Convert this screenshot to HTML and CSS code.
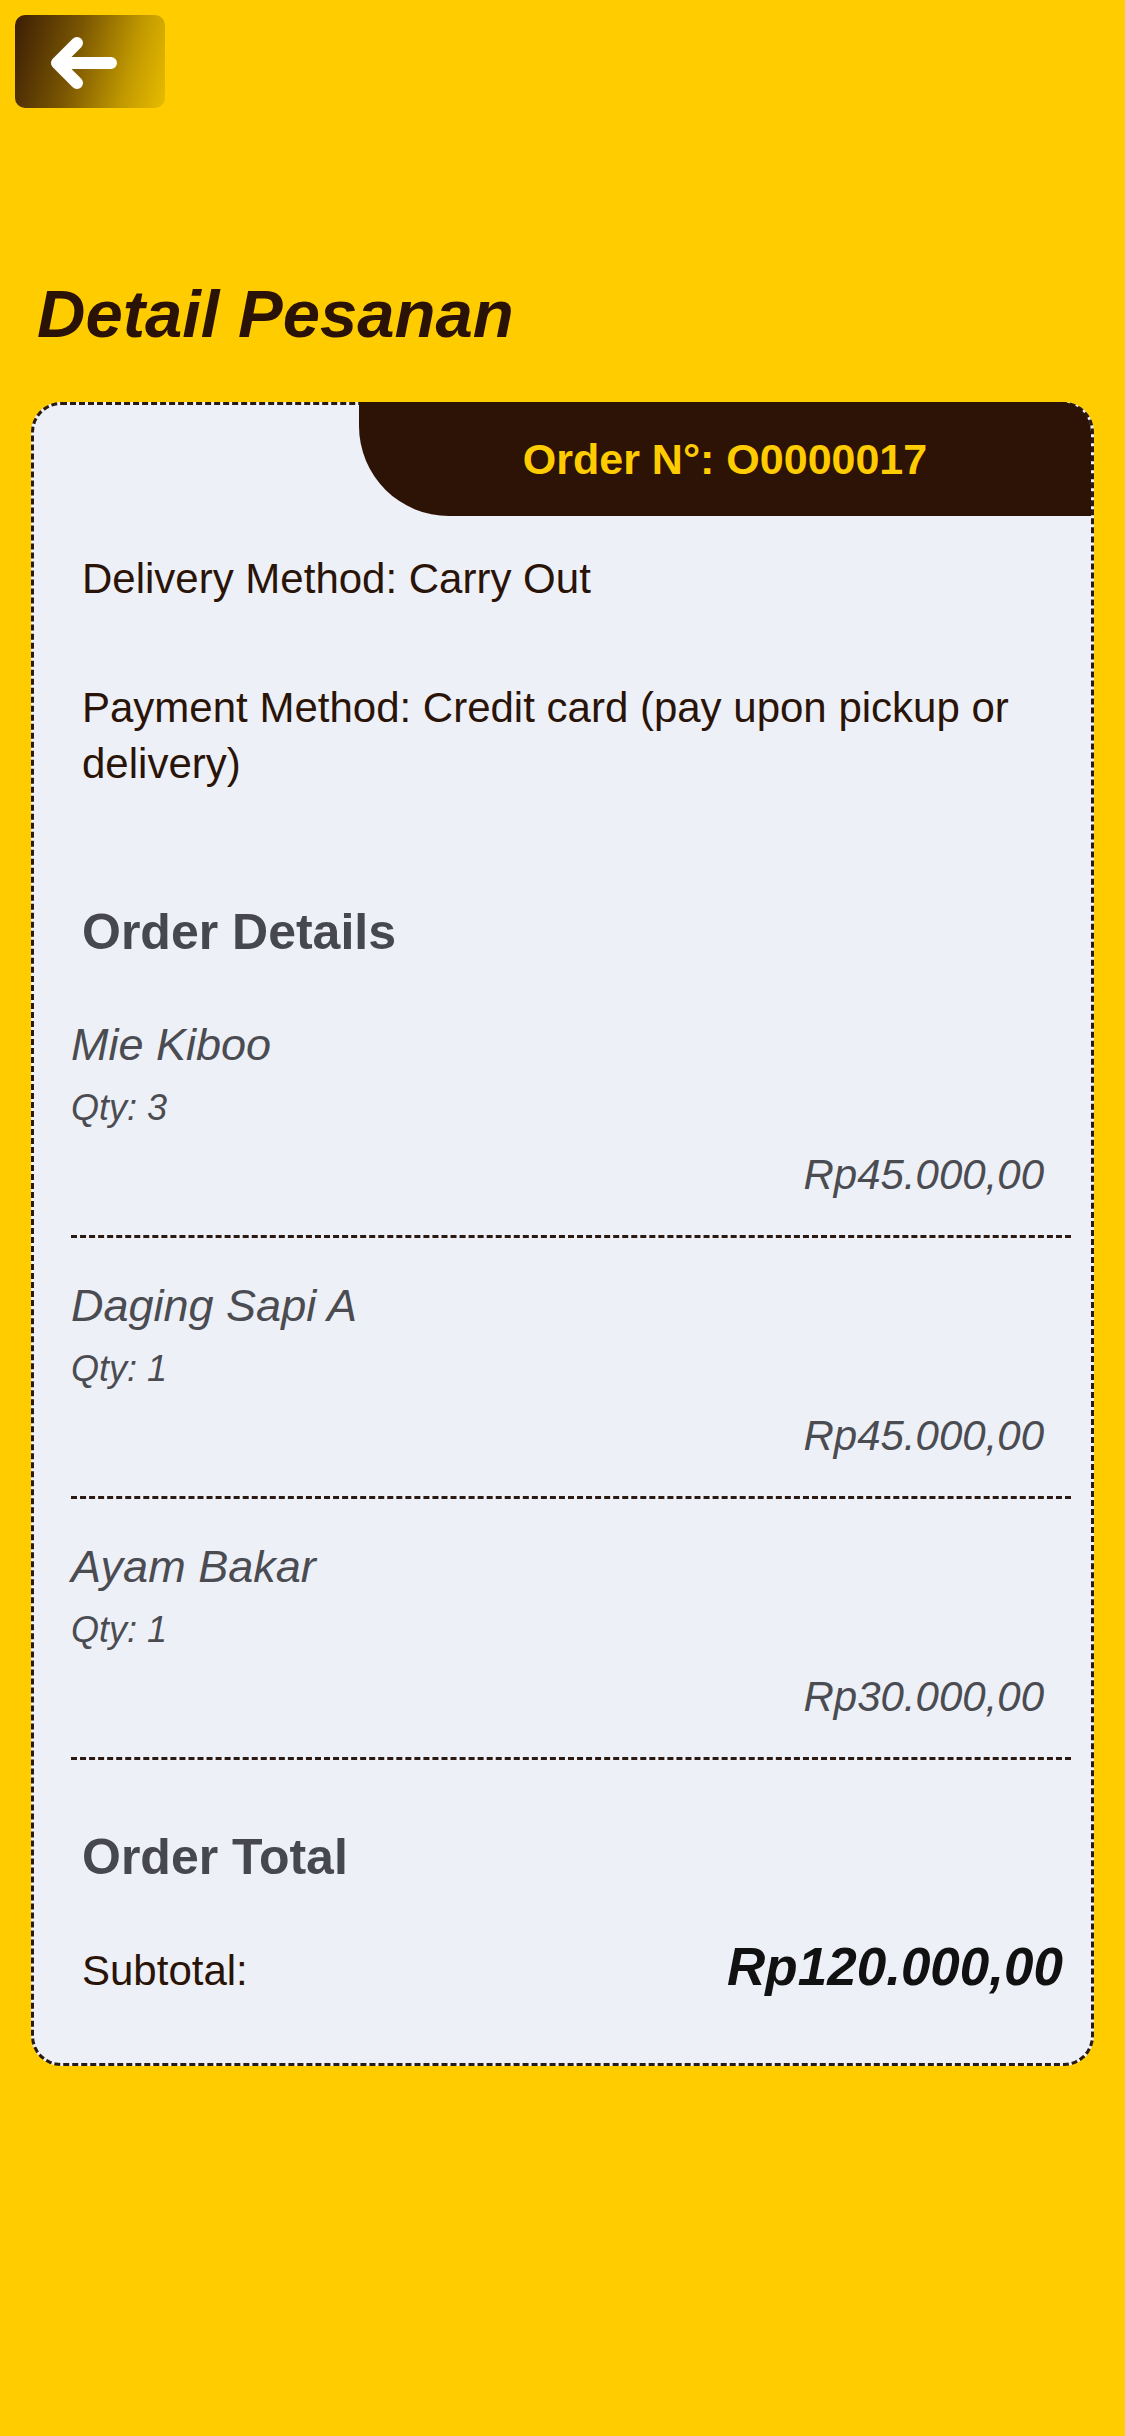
FILE: index.html
```html
<!DOCTYPE html>
<html lang="id">
<head>
  <meta charset="UTF-8">
  <title>Detail Pesanan</title>
  <link rel="stylesheet" href="styles.css">
</head>
<body>

  <div class="top-bar">
    <button class="back-btn" aria-label="Kembali">
      <svg width="150" height="93" viewBox="0 0 150 93">
        <path d="M62 28 L42 48 L62 68 M42 48 L96 48" fill="none" stroke="#fff" stroke-width="12" stroke-linecap="round" stroke-linejoin="round"/>
      </svg>
    </button>
  </div>

  <h1 class="page-title">Detail Pesanan</h1>

  <section class="order-card">
    <div class="order-tab">Order N°: O0000017</div>

    <div class="order-info">
      <p>Delivery Method: Carry Out</p>
      <p class="payment">Payment Method: Credit card (pay upon pickup or delivery)</p>
    </div>

    <h2 class="section-title details-title">Order Details</h2>

    <div class="items">
      <div class="item">
        <div class="item-name">Mie Kiboo</div>
        <div class="item-qty">Qty: 3</div>
        <div class="item-price">Rp45.000,00</div>
      </div>
      <div class="item">
        <div class="item-name">Daging Sapi A</div>
        <div class="item-qty">Qty: 1</div>
        <div class="item-price">Rp45.000,00</div>
      </div>
      <div class="item">
        <div class="item-name">Ayam Bakar</div>
        <div class="item-qty">Qty: 1</div>
        <div class="item-price">Rp30.000,00</div>
      </div>
    </div>

    <h2 class="section-title total-title">Order Total</h2>

    <div class="total-row">
      <span class="total-label">Subtotal:</span>
      <span class="total-price">Rp120.000,00</span>
    </div>
  </section>

</body>
</html>
```

FILE: styles.css
```css
body {
  margin: 0;
  padding: 15px 0 0;
  min-height: 2436px;
  box-sizing: border-box;
  background: #ffcc00;
  font-family: 'Liberation Sans', Arial, sans-serif;
  color: #2a1408;
}

.top-bar {
  padding-left: 15px;
}

.back-btn {
  display: block;
  width: 150px;
  height: 93px;
  padding: 0;
  border: none;
  border-radius: 10px;
  background: linear-gradient(105deg, #3b1d05 0%, #7a5602 40%, #c29a00 75%, #e8bc00 100%);
  cursor: pointer;
}

.back-btn svg {
  display: block;
}

.page-title {
  margin: 166px 0 48px;
  padding-left: 37px;
  font-size: 67px;
  line-height: 80px;
  font-style: italic;
  font-weight: bold;
  color: #2a1206;
}

.order-card {
  display: flex;
  flex-direction: column;
  margin: 0 31px;
  padding-bottom: 61px;
  background: #eef0f7;
  border: 3px dashed #2a1a12;
  border-radius: 30px;
}

.order-tab {
  align-self: flex-end;
  width: 732px;
  height: 114px;
  margin-top: -3px;
  background: #2d1206;
  border-radius: 0 30px 0 90px;
  color: #ffcc00;
  font-size: 43px;
  font-weight: bold;
  line-height: 114px;
  text-align: center;
}

.order-info {
  margin-top: 35px;
  padding: 0 48px;
}

.order-info p {
  margin: 0;
  font-size: 42px;
  line-height: 56px;
}

.order-info .payment {
  margin-top: 73px;
}

.section-title {
  margin: 0;
  padding: 0 48px;
  font-size: 50px;
  line-height: 60px;
  font-weight: bold;
  color: #46484d;
}

.details-title {
  margin-top: 110px;
}

.items {
  margin: 15px 20px 0 37px;
}

.item {
  padding: 41px 27px 35px 0;
  border-bottom: 3px dashed #2a1a12;
  font-style: italic;
  color: #4b4c52;
}

.item-name {
  font-size: 45px;
  line-height: 54px;
}

.item-qty {
  margin-top: 14px;
  font-size: 36px;
  line-height: 44px;
}

.item-price {
  margin-top: 20px;
  font-size: 42px;
  line-height: 50px;
  text-align: right;
}

.total-title {
  margin-top: 67px;
}

.total-row {
  display: flex;
  justify-content: space-between;
  align-items: baseline;
  margin-top: 49px;
  padding: 0 28px 0 48px;
  line-height: 62px;
}

.total-label {
  font-size: 42px;
}

.total-price {
  font-size: 53px;
  font-weight: bold;
  font-style: italic;
  color: #111;
}
```
